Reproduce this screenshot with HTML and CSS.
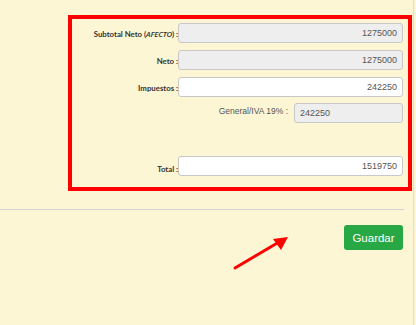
FILE: index.html
```html
<!DOCTYPE html>
<html lang="es">
<head>
<meta charset="utf-8">
<title>Totales</title>
<link rel="stylesheet" href="styles.css">
</head>
<body>
<div class="page">
  <section class="totals">
    <div class="grid">
      <label class="lbl">Subtotal Neto (<span class="it">AFECTO</span>) :</label>
      <input class="field ro" type="text" value="1275000" readonly>
      <label class="lbl">Neto :</label>
      <input class="field ro" type="text" value="1275000" readonly>
      <label class="lbl">Impuestos :</label>
      <input class="field" type="text" value="242250">
      <div class="tax-row">
        <span class="tax-lbl">General/IVA 19% :</span>
        <input class="field ro left small" type="text" value="242250" readonly>
      </div>
      <label class="lbl total-lbl">Total :</label>
      <input class="field total" type="text" value="1519750">
    </div>
  </section>
  <hr class="sep">
  <div class="actions">
    <button class="btn-save" type="button">Guardar</button>
  </div>
  <svg class="arrow" width="416" height="325" viewBox="0 0 416 325">
    <line x1="235" y1="268" x2="279" y2="242" stroke="#ff0000" stroke-width="3" stroke-linecap="round"/>
    <polygon points="288,237 273,239 281,250" fill="#ff0000"/>
  </svg>
</div>
</body>
</html>
```
FILE: styles.css
```css
html, body {
  margin: 0;
  padding: 0;
  background: #fcf6d5;
}
.page {
  position: relative;
  width: 413px;
  min-height: 325px;
  border-right: 1px solid #dcdcdc;
  box-sizing: content-box;
  font-family: "Liberation Sans", Arial, sans-serif;
  padding-top: 15px;
}
.totals {
  margin-left: 68px;
  width: 344px;
  box-sizing: border-box;
  border: 4px solid #ff0000;
  padding: 4px 5px 11px 0;
}
.grid {
  display: grid;
  grid-template-columns: 106px 1fr;
  row-gap: 7px;
}
.lbl {
  font-family: Lato, "Liberation Sans", sans-serif;
  font-weight: bold;
  font-size: 7.8px;
  color: #333;
  text-align: right;
  align-self: end;
  padding-bottom: 4px;
  white-space: nowrap;
}
.it {
  font-style: italic;
  font-family: "Open Sans", "Liberation Sans", sans-serif;
  font-weight: 600;
  letter-spacing: -0.2px;
}
.field {
  box-sizing: border-box;
  height: 20px;
  width: 100%;
  border: 1px solid #c8c8c8;
  border-radius: 3px;
  background: #fff;
  font-family: "Liberation Sans", Arial, sans-serif;
  font-size: 9px;
  color: #555;
  text-align: right;
  padding: 0 5px;
  margin: 0;
  outline: none;
}
.field.ro {
  background: #eeeeee;
}
.field.left {
  text-align: left;
}
.field.small {
  width: 109px;
}
.tax-row {
  grid-column: 1 / 3;
  display: flex;
  justify-content: flex-end;
  align-items: flex-start;
  gap: 6px;
  margin-top: -1px;
}
.tax-lbl {
  font-size: 8.5px;
  color: #555;
  padding-top: 3px;
  white-space: nowrap;
}
.total-lbl {
  margin-top: 26px;
  padding-bottom: 2px;
}
.field.total {
  margin-top: 26px;
}
.sep {
  margin: 18px 0 0 0;
  width: 404px;
  border: 0;
  border-top: 1px solid #d2d2d2;
  height: 0;
}
.actions {
  display: flex;
  justify-content: flex-end;
  padding: 15px 10px 0 0;
}
.btn-save {
  width: 59px;
  height: 25px;
  background: #28a745;
  color: #fff;
  border: 0;
  border-radius: 3px;
  font-family: "Liberation Sans", Arial, sans-serif;
  font-size: 11.5px;
  padding: 0;
}
.arrow {
  position: absolute;
  left: 0;
  top: 0;
  pointer-events: none;
}
```
